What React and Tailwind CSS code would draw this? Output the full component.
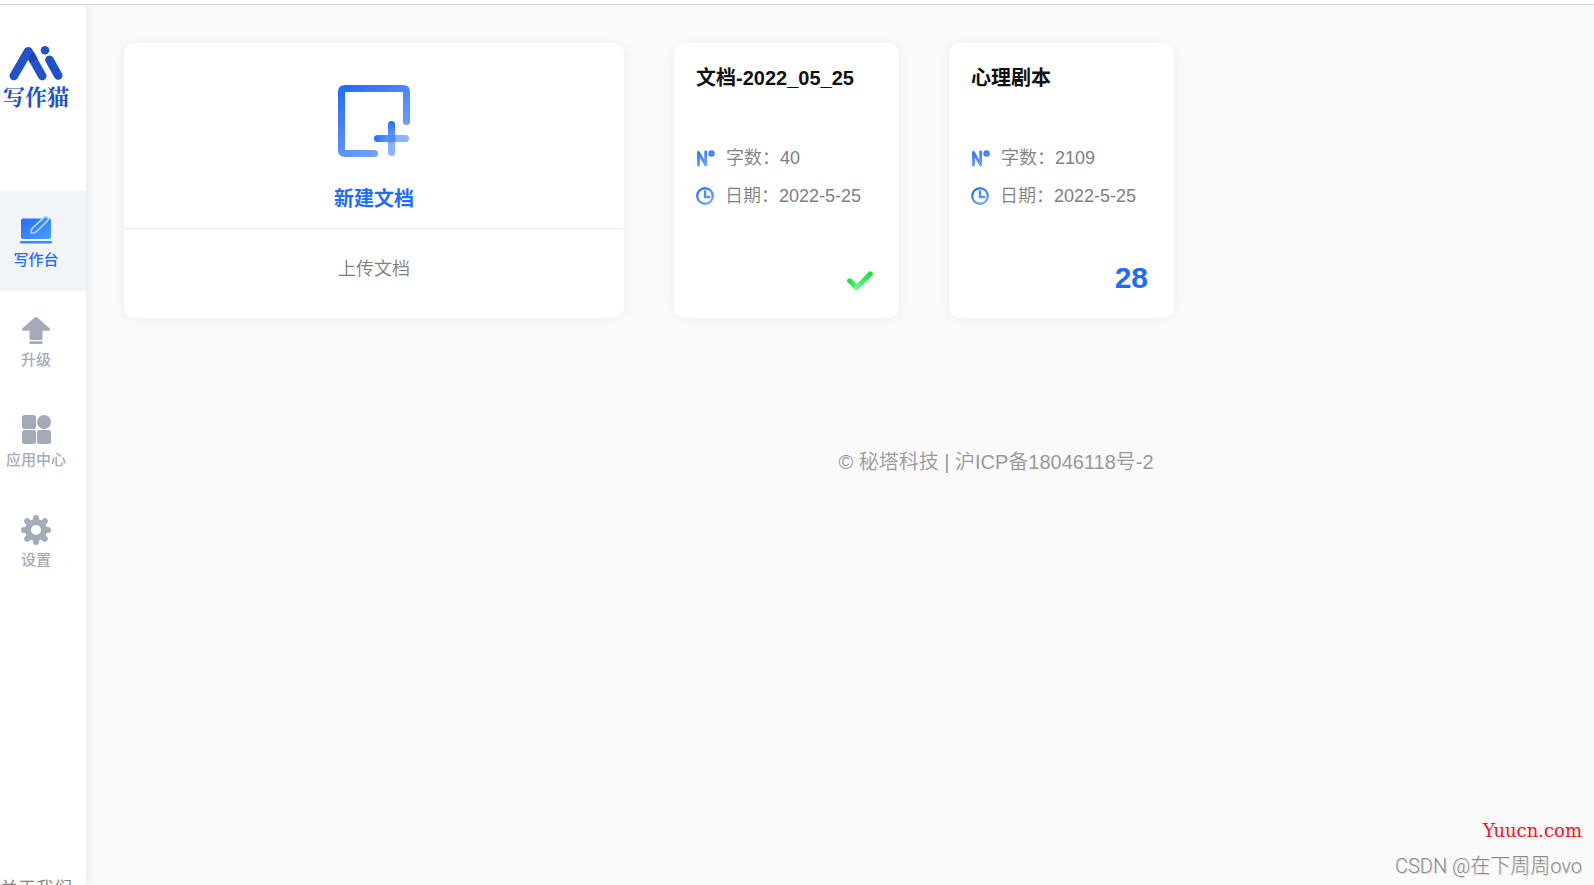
const docs = [
  { title: "文档-2022_05_25", words: 40, date: "2022-5-25", issues: 0 },
  { title: "心理剧本", words: 2109, date: "2022-5-25", issues: 28 },
];

function LogoIcon() {
  return (
    <svg width="54" height="36" viewBox="0 0 54 36" fill="none">
      <path d="M19.5 6.5L33.2 31" stroke="#2052cc" strokeWidth="8.6" strokeLinecap="round" />
      <path d="M21 9L25 16" stroke="#1b46b4" strokeWidth="8.6" />
      <path d="M4.800 31L19 6.500" stroke="#2052cc" strokeWidth="8.6" strokeLinecap="round" />
      <path d="M40.500 14.800L49.200 30.500" stroke="#2052cc" strokeWidth="8.6" strokeLinecap="round" />
      <circle cx="36" cy="5.300" r="4.300" fill="#2052cc" />
    </svg>
  );
}

function DeskIcon() {
  return (
    <svg width="34" height="30" viewBox="0 0 34 30" fill="none">
      <defs>
        <linearGradient id="desk" x1="0" y1="0" x2="1" y2="1">
          <stop offset="0" stopColor="#226dfe" />
          <stop offset="1" stopColor="#4ba0ff" />
        </linearGradient>
      </defs>
      <rect x="2" y="3.500" width="30" height="20.500" rx="2" fill="url(#desk)" />
      <rect x="1" y="26" width="32" height="2.600" rx="1" fill="#3c88fb" />
      <path
        d="M13 13.500L25.300 2.100Q27 0.800 28.700 2.400Q30 4.200 28.500 5.700L17 17Q15.500 18.300 12.300 18.300Q12 15 13 13.500Z"
        fill="#3c88fb"
        stroke="#bfd8ff"
        strokeWidth="1.600"
        strokeLinejoin="round"
      />
    </svg>
  );
}

function UpgradeIcon() {
  return (
    <svg width="30" height="30" viewBox="0 -1 30 30" fill="#a4abb8">
      <path d="M14 1.300Q15 0.500 16 1.300L28.800 12.500Q29.700 14.500 28 14.800H21.500V22.300Q21.500 24 19.800 24H10.200Q8.500 24 8.500 22.300V14.800H2Q0.300 14.500 1.200 12.500Z" />
      <rect x="8.500" y="25.300" width="13" height="2.600" rx="1" />
    </svg>
  );
}

function AppsIcon() {
  return (
    <svg width="30" height="30" viewBox="0 0 30 30" fill="#a4abb8">
      <rect x="1" y="0" width="14" height="14" rx="2.500" />
      <circle cx="23" cy="7" r="7" />
      <rect x="1" y="15" width="14" height="14" rx="2.500" />
      <rect x="16" y="15" width="14" height="14" rx="2.500" />
    </svg>
  );
}

function GearIcon() {
  return (
    <svg width="30" height="30" viewBox="0 0 30 30" fill="none" stroke="#a4abb8">
      <circle cx="15" cy="15" r="8" strokeWidth="6" />
      <path
        d="M15 5V3M15 25V27M5 15H3M25 15H27M8 8L6.200 6.200M22 22L23.800 23.800M22 8L23.800 6.200M8 22L6.200 23.800"
        strokeWidth="6"
        strokeLinecap="round"
      />
    </svg>
  );
}

function NewDocIcon() {
  return (
    <svg width="72" height="72" viewBox="0 0 72 72" fill="none">
      <defs>
        <linearGradient id="frame" gradientUnits="userSpaceOnUse" x1="8" y1="0" x2="58" y2="72">
          <stop offset="0" stopColor="#226cfd" />
          <stop offset="1" stopColor="#7eacff" />
        </linearGradient>
        <linearGradient id="plusH" gradientUnits="userSpaceOnUse" x1="36" y1="0" x2="71" y2="0">
          <stop offset="0" stopColor="#226cfd" />
          <stop offset="0.700" stopColor="#8bb3ff" />
        </linearGradient>
        <linearGradient id="plusV" gradientUnits="userSpaceOnUse" x1="0" y1="36" x2="0" y2="71">
          <stop offset="0" stopColor="#226cfd" />
          <stop offset="0.700" stopColor="#8bb3ff" />
        </linearGradient>
      </defs>
      <path
        d="M68.500 36.500V7Q68.500 3.500 65 3.500H7Q3.500 3.500 3.500 7V65Q3.500 68.500 7 68.500H36.500"
        stroke="url(#frame)"
        strokeWidth="7"
        strokeLinecap="round"
      />
      <rect x="36" y="50" width="35" height="7" rx="3.500" fill="url(#plusH)" />
      <rect x="50" y="36" width="7" height="35" rx="3.500" fill="url(#plusV)" />
      <rect x="50" y="50" width="7" height="7" fill="#5289f2" />
    </svg>
  );
}

function WordsIcon() {
  return (
    <svg width="19" height="18" viewBox="0 0 19 18" fill="none">
      <defs>
        <linearGradient id="words" gradientUnits="userSpaceOnUse" x1="2" y1="2" x2="12" y2="18">
          <stop offset="0" stopColor="#2a72fd" />
          <stop offset="1" stopColor="#7eabff" />
        </linearGradient>
      </defs>
      <path d="M2.500 16.200V3.500L9.700 16V3" stroke="url(#words)" strokeWidth="2.800" strokeLinecap="round" strokeLinejoin="round" />
      <circle cx="15.500" cy="4.500" r="3.200" fill="#3d80fd" />
      <circle cx="15.800" cy="4.800" r="0.800" fill="#8db5ff" />
    </svg>
  );
}

function ClockIcon() {
  return (
    <svg width="18" height="18" viewBox="0 0 18 18" fill="none">
      <defs>
        <linearGradient id="clock" gradientUnits="userSpaceOnUse" x1="3" y1="1" x2="14" y2="18">
          <stop offset="0" stopColor="#2a72fd" />
          <stop offset="1" stopColor="#7eabff" />
        </linearGradient>
      </defs>
      <circle cx="9" cy="9" r="7.800" stroke="url(#clock)" strokeWidth="2.400" />
      <path d="M9 4.500V10H13.500" stroke="url(#clock)" strokeWidth="2.400" strokeLinecap="round" />
    </svg>
  );
}

function CheckIcon() {
  return (
    <svg width="26" height="20" viewBox="0 0 26 20" fill="none">
      <defs>
        <linearGradient id="long" gradientUnits="userSpaceOnUse" x1="24" y1="3" x2="9" y2="18">
          <stop offset="0" stopColor="#0be638" />
          <stop offset="1" stopColor="#7df29a" />
        </linearGradient>
        <linearGradient id="short" gradientUnits="userSpaceOnUse" x1="2" y1="9" x2="10" y2="17">
          <stop offset="0" stopColor="#0be638" />
          <stop offset="1" stopColor="#5ff082" />
        </linearGradient>
      </defs>
      <path d="M2.600 9.800L9.500 16.700" stroke="url(#short)" strokeWidth="5" strokeLinecap="round" />
      <path d="M9.500 16.700L23.300 2.900" stroke="url(#long)" strokeWidth="5" strokeLinecap="round" />
    </svg>
  );
}

function NavItem({ icon, label, active }) {
  return (
    <a
      href="#"
      className={`block h-[100px] shrink-0 pt-6 pr-[14px] text-[15px] leading-5 font-medium ${
        active ? "bg-[#f1f5fa] text-[#226cfd]" : "text-[#a4abb8]"
      }`}
    >
      <span className="flex flex-col items-center gap-[5px] whitespace-nowrap">
        {icon}
        {label}
      </span>
    </a>
  );
}

function Sidebar() {
  return (
    <aside className="flex w-[86px] shrink-0 flex-col bg-white shadow-[0_0_10px_rgba(0,0,0,0.1)]">
      <div className="flex h-[186px] shrink-0 flex-col items-center gap-[3px] pt-10 pr-[14px] font-['Noto_Serif_CJK_SC','Noto_Sans_CJK_SC',serif] text-[22px] leading-6 font-bold whitespace-nowrap text-[#2052cc]">
        <LogoIcon />
        写作猫
      </div>
      <nav className="flex flex-col">
        <NavItem icon={<DeskIcon />} label="写作台" active />
        <NavItem icon={<UpgradeIcon />} label="升级" />
        <NavItem icon={<AppsIcon />} label="应用中心" />
        <NavItem icon={<GearIcon />} label="设置" />
      </nav>
      <a
        href="#"
        className="mt-[284px] shrink-0 pr-[14px] text-center text-lg font-[350] whitespace-nowrap text-[#808080]"
      >
        关于我们
      </a>
    </aside>
  );
}

function NewDocCard() {
  return (
    <div className="flex h-[275px] w-[500px] flex-col rounded-[10px] bg-white px-px shadow-[0_0_12px_rgba(0,0,0,0.06)]">
      <button className="flex h-[186px] flex-col items-center gap-7 border-b border-[#e8e8e8] pt-[42px] text-xl leading-7 font-bold text-[#226cfd]">
        <NewDocIcon />
        新建文档
      </button>
      <button className="flex-1 pb-[10px] text-lg font-[350] text-[#808080]">上传文档</button>
    </div>
  );
}

function DocCard({ doc }) {
  return (
    <article className="flex h-[275px] w-[225px] flex-col rounded-[10px] bg-white px-[22px] pt-[21px] shadow-[0_0_12px_rgba(0,0,0,0.06)]">
      <h2 className="text-xl leading-7 font-bold text-[#111]">{doc.title}</h2>
      <div className="mt-[52px] flex flex-col gap-[10px] text-lg leading-7 font-[350] text-[#808080]">
        <p className="flex items-center gap-[11px]">
          <WordsIcon />
          字数：{doc.words}
        </p>
        <p className="flex items-center gap-[11px]">
          <ClockIcon />
          日期：{doc.date}
        </p>
      </div>
      <div className="mt-[51px] flex h-10 items-center justify-end pr-1 text-3xl font-bold text-[#226cfd]">
        {doc.issues ? <span className="pb-[6px]">{doc.issues}</span> : <CheckIcon />}
      </div>
    </article>
  );
}

export default function App() {
  return (
    <div className="relative flex h-screen flex-col overflow-hidden bg-white font-['Liberation_Sans','Noto_Sans_CJK_SC',sans-serif]">
      <div className="h-[5px] shrink-0 border-b border-[#d5d5d8]" />
      <div className="flex min-h-0 flex-1 overflow-hidden bg-[#fafafa]">
        <Sidebar />
        <main className="min-w-0 flex-1 pt-[38px] pl-[38px]">
          <div className="flex flex-wrap gap-[50px]">
            <NewDocCard />
            {docs.map((doc) => (
              <DocCard key={doc.title} doc={doc} />
            ))}
          </div>
          <footer className="mt-[130px] pl-[274px] text-center text-xl font-[350] text-[#999]">
            © 秘塔科技 | 沪ICP备18046118号-2
          </footer>
        </main>
      </div>
      <div className="absolute right-3 bottom-[3px] flex flex-col items-end gap-[3px]">
        <span className="font-['DejaVu_Serif',serif] text-lg leading-8 text-[#fe0d1f]">Yuucn.com</span>
        <span className="font-['Roboto','Noto_Sans_CJK_SC',sans-serif] text-xl leading-8 font-light text-[#8c8c8c] [text-shadow:1px_1px_0_#ddd]">
          CSDN @在下周周ovo
        </span>
      </div>
    </div>
  );
}
